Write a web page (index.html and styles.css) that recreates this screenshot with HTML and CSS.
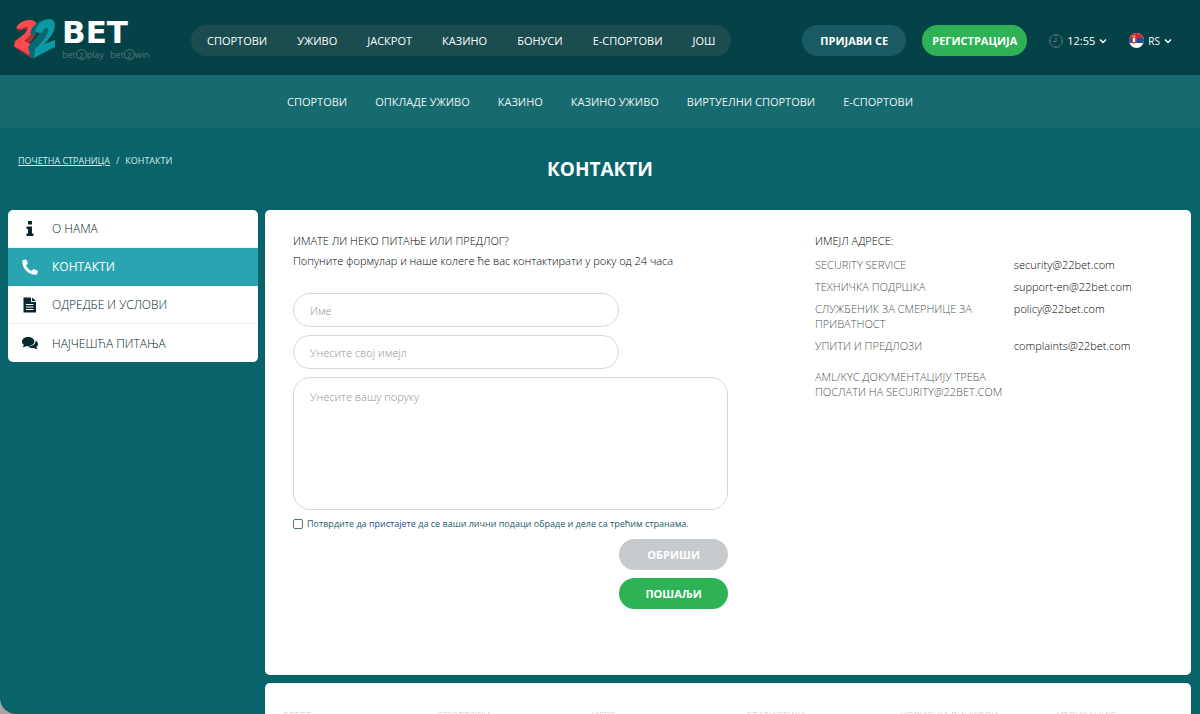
FILE: index.html
```html
<!DOCTYPE html>
<html lang="sr">
<head>
<meta charset="utf-8">
<meta name="viewport" content="width=device-width, initial-scale=1">
<title>Контакти</title>
<link rel="stylesheet" href="styles.css">
</head>
<body>
<div class="page">
  <header class="header">
    <a class="logo" href="#" aria-label="22BET">
      <svg class="logo-mark" viewBox="0 0 42 40" aria-hidden="true">
        <path fill="#a93238" d="M2 9 5 12 10 10 14 12 4 22 0 28 17 39 21 34 13 27 22 16 23 5z"/>
        <path fill="#ff4a4c" d="M2 9C5 3 11 1 16 1c6 0 8 4 5 9-2 4-7 8-11 12l12 6-4 9L0 27l1-5c6-4 11-8 13-12 1-3-3-3-6 0z"/>
        <path fill="#066872" d="M16 14C18 7 23 3 29 1l8 1 2 10-10 15-9 13-4-3-2-9L25 15l-2-2-3 4z"/>
        <path fill="#0d98a4" d="M21 13C23 5 29 0 35 0c6 0 7 5 5 11-2 6-6 10-10 14l11-4v7L20 39l1-9c6-6 11-11 13-17 1-5-3-6-6 1z"/>
      </svg>
      <span class="logo-text">
        <span class="logo-name">BET</span>
        <span class="logo-tag"><span>bet<i>2</i>play</span><span>bet<i>2</i>win</span></span>
      </span>
    </a>
    <nav class="main-nav" aria-label="Главни мени">
      <a href="#">СПОРТОВИ</a><a href="#">УЖИВО</a><a href="#">JАСКРОТ</a><a href="#">КАЗИНО</a><a href="#">БОНУСИ</a><a href="#">Е-СПОРТОВИ</a><a href="#">ЈОШ</a>
    </nav>
    <div class="account">
      <button class="btn btn-login" type="button">ПРИЈАВИ СЕ</button>
      <button class="btn btn-green btn-register" type="button">РЕГИСТРАЦИЈА</button>
    </div>
    <div class="settings">
      <button class="picker" type="button">
        <svg class="clock" viewBox="0 0 14 14" aria-hidden="true"><g fill="none" stroke="#52777a"><circle cx="7" cy="7" r="6.4"/><path d="M7 3v4.500H4M7 1v1M7 12v1M1 7h1M12 7h1"/></g></svg>
        <span>12:55</span>
        <svg class="chevron" viewBox="0 0 8 6" aria-hidden="true"><path d="m1 1.500 3 3 3-3" fill="none" stroke="#fff" stroke-width="1.500"/></svg>
      </button>
      <button class="picker lang" type="button">
        <svg class="flag" viewBox="0 0 15 15" aria-hidden="true"><defs><clipPath id="round"><circle cx="7.500" cy="7.500" r="7.500"/></clipPath></defs><g clip-path="url(#round)"><path fill="#fff" d="M0 0h15v15H0z"/><path fill="#d3213a" d="M0 0h15v5H0z"/><path fill="#1b4f9c" d="M0 5h15v5H0z"/><path fill="#e2434a" d="M2.500 4h5v5L5 11 2.500 9z"/><path fill="#fff" d="M4 5h2v4H4z"/><path fill="#edb92e" d="M3.500 2.500h3v1.500h-3z"/></g></svg>
        <span>RS</span>
        <svg class="chevron" viewBox="0 0 8 6" aria-hidden="true"><path d="m1 1.500 3 3 3-3" fill="none" stroke="#fff" stroke-width="1.500"/></svg>
      </button>
    </div>
  </header>
  <nav class="sub-nav" aria-label="Производи">
    <a href="#">СПОРТОВИ</a><a href="#">ОПКЛАДЕ УЖИВО</a><a href="#">КАЗИНО</a><a href="#">КАЗИНО УЖИВО</a><a href="#">ВИРТУЕЛНИ СПОРТОВИ</a><a href="#">Е-СПОРТОВИ</a>
  </nav>
  <div class="title-row">
    <div class="breadcrumbs"><a href="#">ПОЧЕТНА СТРАНИЦА</a><span>/</span><span>КОНТАКТИ</span></div>
    <h1>КОНТАКТИ</h1>
  </div>
  <div class="layout">
    <nav class="side-nav" aria-label="Информације">
      <a href="#"><svg viewBox="0 0 16 16" aria-hidden="true"><path fill="currentColor" d="M6 0h4v3.500H6zM4.500 5.500H10v7h1.500V15h-7v-2.500H6V8H4.500z"/></svg>О НАМА</a>
      <a class="active" href="#" aria-current="page"><svg viewBox="0 0 16 16" aria-hidden="true"><path fill="currentColor" d="M3.500.5C4 .3 4.300.5 4.500 1l1.300 3c.2.5 0 .8-.3 1.100L4 6.300c1 2.500 3 4.500 5.700 5.700l1.300-1.500c.3-.4.700-.5 1.100-.3l3.200 1.300c.5.200.7.600.5 1l-.6 2.500c-.1.500-.5.800-1 .8C6.300 15.800.2 9.700.2 1.900c0-.5.3-.9.8-1z"/></svg>КОНТАКТИ</a>
      <a href="#"><svg viewBox="0 0 16 16" aria-hidden="true"><path fill="currentColor" fill-rule="evenodd" d="M1.500.5H9V5h5v10.500H1.500zM4 7v1h7.500V7zm0 2.500v1h7.500v-1zM4 12v1h7.500v-1z"/><path fill="currentColor" d="M10 .5 14 4h-4z"/></svg>ОДРЕДБЕ И УСЛОВИ</a>
      <a href="#"><svg viewBox="0 0 16 16" aria-hidden="true"><path fill="currentColor" d="M6.200 2C9.600 2 12.400 4 12.400 6.600s-2.800 4.600-6.200 4.600c-.7 0-1.300-.1-1.900-.2C3.300 11.800 2 12.200.6 12.200c.7-.7 1.200-1.500 1.300-2.200C.7 9.200 0 8 0 6.600 0 4 2.800 2 6.200 2z"/><path fill="currentColor" d="M13.600 5.500C15 6.300 16 7.600 16 9c0 1.200-.7 2.300-1.700 3 .2.800.7 1.500 1.300 2.100-1.400 0-2.700-.5-3.700-1.200-2.200.4-4.400-.1-5.700-1.500 4.300.1 7.700-2.300 7.400-5.900z"/></svg>НАЈЧЕШЋА ПИТАЊА</a>
    </nav>
    <div class="content">
      <main class="panel contact">
        <form class="form">
          <p class="lead">ИМАТЕ ЛИ НЕКО ПИТАЊЕ ИЛИ ПРЕДЛОГ?</p>
          <p class="hint">Попуните формулар и наше колеге ће вас контактирати у року од 24 часа</p>
          <div class="fields">
            <input class="field" type="text" aria-label="Име" placeholder="Име">
            <input class="field" type="email" aria-label="Имејл" placeholder="Унесите свој имејл">
            <textarea class="field message" aria-label="Порука" placeholder="Унесите вашу поруку"></textarea>
          </div>
          <div class="consent">
            <input id="consent" type="checkbox">
            <label for="consent">Потврдите да <a href="#">пристајете</a> да се ваши лични подаци обраде и деле са трећим странама.</label>
          </div>
          <div class="actions">
            <button class="btn btn-grey" type="reset">ОБРИШИ</button>
            <button class="btn btn-green" type="submit">ПОШАЉИ</button>
          </div>
        </form>
        <section class="emails">
          <h2>ИМЕЈЛ АДРЕСЕ:</h2>
          <dl>
            <dt>SECURITY SERVICE</dt><dd>security@22bet.com</dd>
            <dt>ТЕХНИЧКА ПОДРШКА</dt><dd>support-en@22bet.com</dd>
            <dt>СЛУЖБЕНИК ЗА СМЕРНИЦЕ ЗА ПРИВАТНОСТ</dt><dd>policy@22bet.com</dd>
            <dt>УПИТИ И ПРЕДЛОЗИ</dt><dd>complaints@22bet.com</dd>
          </dl>
          <p class="note">AML/KYC ДОКУМЕНТАЦИЈУ ТРЕБА ПОСЛАТИ НА SECURITY@22BET.COM</p>
        </section>
      </main>
      <footer class="panel footer">
        <span>22БЕТ</span><span>СПОРТОВИ</span><span>ИГРЕ</span><span>СТАТИСТИКА</span><span>КОРИСНИ ЛИНКОВИ</span><span>АПЛИКАЦИЈЕ</span>
      </footer>
    </div>
  </div>
</div>
</body>
</html>
```

FILE: styles.css
```css
* { box-sizing: border-box; }

body {
  margin: 0;
  background: #aaa5a7;
  font-family: "Open Sans", "Noto Sans", sans-serif;
  font-size: 11px;
  font-weight: 300;
  color: #000;
}

a { color: inherit; text-decoration: none; }
h1, h2, p, dl, dd { margin: 0; }
button, input, textarea { font: inherit; }

.page {
  display: flex;
  flex-direction: column;
  height: 100vh;
  overflow: hidden;
  background: #08636a;
  border-bottom-left-radius: 16px;
}

.header {
  display: flex;
  flex: none;
  align-items: center;
  height: 75px;
  padding: 0 28px 0 14px;
  background: #044248;
  color: #fff;
}

.logo { display: flex; gap: 6px; width: 177px; padding-top: 4px; }
.logo-mark { width: 42px; height: 40px; margin-top: 2px; }
.logo-text { display: flex; flex-direction: column; }
.logo-name { font: bold 31px/30px "DejaVu Sans", sans-serif; }
.logo-tag {
  display: flex;
  gap: 6px;
  color: #52777a;
  font-size: 9px;
  font-weight: 400;
  line-height: 16px;
  white-space: nowrap;
}
.logo-tag i {
  display: inline-block;
  width: 11px;
  height: 11px;
  border: 1px solid #52777a;
  border-radius: 50%;
  font-size: 8px;
  font-style: normal;
  line-height: 9px;
  text-align: center;
}

.main-nav, .sub-nav { display: flex; font-weight: 500; white-space: nowrap; }
.main-nav {
  gap: 30px;
  align-items: center;
  height: 31px;
  margin-top: 6px;
  padding: 0 16px;
  border-radius: 16px;
  background: #1b4c50;
}

.account { display: flex; gap: 16px; margin: 6px 22px 0 auto; }

.btn {
  height: 31px;
  padding: 0;
  border: 0;
  border-radius: 16px;
  color: #fff;
  font-weight: 700;
  text-align: center;
  cursor: pointer;
}
.btn-login { width: 104px; background: #195a63; }
.btn-register { width: 105px; }
.btn-green { background: #2db355; }
.btn-grey { background: #c7cbce; }

.settings { display: flex; gap: 22px; margin-top: 6px; }
.picker {
  display: flex;
  gap: 4px;
  align-items: center;
  padding: 0;
  border: 0;
  background: none;
  color: #fff;
  font-weight: 500;
}
.lang { font-size: 10px; }
.clock { width: 14px; height: 14px; }
.flag { width: 15px; height: 15px; }
.chevron { width: 8px; height: 6px; }

.sub-nav {
  flex: none;
  gap: 28px;
  align-items: center;
  justify-content: center;
  height: 53px;
  background: #176a6e;
  color: #e9f3f3;
}

.title-row {
  position: relative;
  flex: none;
  height: 82px;
  padding-top: 27px;
  color: #fff;
}
.title-row h1 { font-size: 19px; line-height: 28px; text-align: center; }
.breadcrumbs {
  position: absolute;
  top: 26px;
  left: 18px;
  display: flex;
  gap: 6px;
  font-size: 9px;
  font-weight: 400;
  line-height: 14px;
  color: #d8e8e9;
}
.breadcrumbs a { text-decoration: underline; }

.layout {
  display: grid;
  grid-template-columns: 250px 1fr;
  gap: 7px;
  align-items: start;
  padding: 0 9px 0 8px;
}

.side-nav { overflow: hidden; border-radius: 5px; background: #fff; color: #04282d; }
.side-nav a {
  display: flex;
  gap: 14px;
  align-items: center;
  height: 38px;
  padding: 0 14px;
  border-bottom: 1px solid #edf0f0;
  font-size: 12px;
}
.side-nav a:last-child { border-bottom: 0; }
.side-nav svg { width: 16px; height: 16px; }
.side-nav .active { border-color: #2aa4b0; background: #2aa4b0; color: #fff; font-weight: 500; }

.content { display: grid; gap: 8px; }
.panel { border-radius: 5px; background: #fff; }

.contact {
  display: grid;
  grid-template-columns: 3fr 2fr;
  min-height: 465px;
  padding: 23px 28px;
}
.form { max-width: 435px; }
.lead, .emails h2 { font-size: 11px; font-weight: 300; line-height: 16px; }
.hint { margin-top: 4px; line-height: 16px; }

.fields { display: grid; gap: 8px; margin-top: 24px; }
.field {
  width: 75%;
  height: 34px;
  padding: 0 16px;
  border: 1px solid #d5d9db;
  border-radius: 17px;
  background: #fff;
  outline: none;
}
.field::placeholder { color: #8d9295; opacity: 1; }
.message { width: 100%; height: 133px; padding-top: 11px; resize: none; }

.consent {
  display: flex;
  gap: 4px;
  align-items: center;
  margin-top: 8px;
  color: #1d5d68;
  font-size: 9px;
  font-weight: 400;
  line-height: 12px;
  white-space: nowrap;
}
.consent a { color: #2d4a93; }
.consent input { appearance: none; width: 10px; height: 10px; margin: 0; border: 1px solid #52777a; border-radius: 2px; }

.actions { display: grid; gap: 8px; width: 25%; margin: 9px 0 0 auto; }

.emails dl { display: grid; grid-template-columns: 4fr 3fr; row-gap: 7px; margin-top: 8px; line-height: 15px; }
.emails dt, .note { color: #4c5356; }
.emails dt { max-width: 170px; }
.note { max-width: 198px; margin-top: 16px; line-height: 15px; }

.footer {
  display: grid;
  grid-template-columns: repeat(5, 17%) 1fr;
  height: 200px;
  padding: 26px 0 0 18px;
  color: #c7cbce;
  font-size: 10px;
}
```
